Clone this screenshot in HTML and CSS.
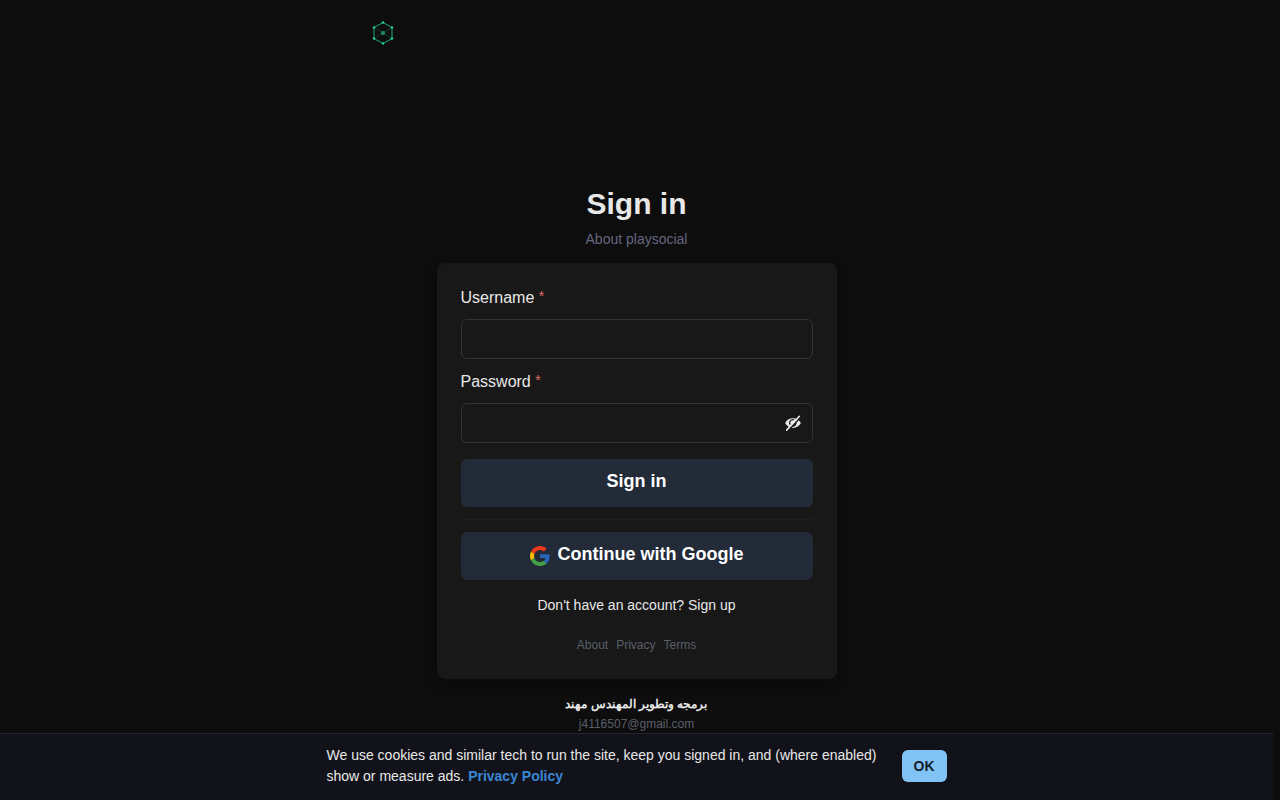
FILE: index.html
```html
<!DOCTYPE html>
<html lang="en">
<head>
    <meta charset="UTF-8">
    <meta name="viewport" content="width=device-width, initial-scale=1.0">
    <title>Sign in</title>
    <link rel="stylesheet" href="styles.css">
</head>
<body>
    <header class="site-header">
        <a href="#" class="logo" aria-label="Home">
            <svg width="24" height="24" viewBox="0 0 24 24" fill="none" stroke="#1fa87c">
                <path d="M12 1.5L21 6.5V17.5L12 22.5L3 17.5V6.5Z" stroke-width="1"/>
                <path d="M12 12L3 6.5M12 12L21 6.5M12 12L3 17.5M12 12L21 17.5" stroke-width="0.8" opacity="0.35"/>
                <circle cx="12" cy="12" r="2.2" fill="#1fa87c" stroke="none" opacity="0.7"/>
                <g fill="#2ecf9a" stroke="none">
                    <circle cx="12" cy="1.5" r="1.2"/>
                    <circle cx="21" cy="6.5" r="1.2"/>
                    <circle cx="21" cy="17.5" r="1.2"/>
                    <circle cx="12" cy="22.5" r="1.2"/>
                    <circle cx="3" cy="17.5" r="1.2"/>
                    <circle cx="3" cy="6.5" r="1.2"/>
                </g>
            </svg>
        </a>
    </header>

    <main class="login">
        <h1>Sign in</h1>
        <a href="#" class="subtitle">About playsocial</a>

        <form class="card">
            <div class="field">
                <label for="username">Username <span class="required">*</span></label>
                <input type="text" id="username">
            </div>
            <div class="field">
                <label for="password">Password <span class="required">*</span></label>
                <div class="password-box">
                    <input type="password" id="password">
                    <button type="button" class="toggle" aria-label="Show password">
                        <svg width="18" height="18" viewBox="0 0 24 24">
                            <path fill="#ececec" d="M1.500 12C3.500 8 7.500 5.500 12 5.500s8.500 2.500 10.500 6.500c-2 4-6 6.500-10.500 6.500S3.500 16 1.500 12z"/>
                            <path d="M8.500 14.500A4.200 4.200 0 0 1 13.500 8M15.800 10.500A4.200 4.200 0 0 1 11 16" fill="none" stroke="#181818" stroke-width="1.6"/>
                            <path d="M5 22.500L22.500 4" stroke="#181818" stroke-width="2"/>
                            <path d="M3.500 21.500L20.500 3" stroke="#ececec" stroke-width="2" stroke-linecap="round"/>
                        </svg>
                    </button>
                </div>
            </div>
            <button type="submit" class="btn">Sign in</button>
            <hr>
            <button type="button" class="btn">
                <svg width="20" height="20" viewBox="0 0 48 48">
                    <path fill="#ea3a1e" d="M24 9.500c3.540 0 6.710 1.220 9.210 3.600l6.850-6.850C35.900 2.380 30.470 0 24 0 14.620 0 6.510 5.380 2.560 13.220l7.980 6.190C12.430 13.720 17.740 9.500 24 9.500z"/>
                    <path fill="#2866b8" d="M46.980 24.550c0-1.570-.15-3.090-.38-4.550H24v9.020h12.940c-.58 2.960-2.260 5.480-4.780 7.180l7.730 6c4.510-4.180 7.090-10.360 7.090-17.650z"/>
                    <path fill="#fbbc05" d="M10.530 28.590c-.48-1.450-.76-2.990-.76-4.590s.27-3.140.76-4.590l-7.980-6.190C.92 16.460 0 20.120 0 24c0 3.880.92 7.540 2.560 10.780l7.970-6.190z"/>
                    <path fill="#43a047" d="M24 48c6.480 0 11.930-2.130 15.890-5.810l-7.730-6c-2.150 1.450-4.920 2.300-8.160 2.300-6.260 0-11.570-4.220-13.470-9.910l-7.980 6.190C6.510 42.620 14.620 48 24 48z"/>
                </svg>
                <span>Continue with Google</span>
            </button>
            <a href="#" class="signup">Don't have an account? Sign up</a>
            <nav class="links">
                <a href="#">About</a>
                <a href="#">Privacy</a>
                <a href="#">Terms</a>
            </nav>
        </form>
    </main>

    <footer class="credits">
        <p class="author" lang="ar" dir="rtl">برمجه وتطوير المهندس مهند</p>
        <a href="mailto:j4116507@gmail.com">j4116507@gmail.com</a>
    </footer>

    <div class="cookie-bar">
        <div class="cookie-content">
            <p>We use cookies and similar tech to run the site, keep you signed in, and (where enabled) show or measure ads. <a href="#">Privacy Policy</a></p>
            <button type="button">OK</button>
        </div>
    </div>
</body>
</html>
```

FILE: styles.css
```css
* {
    box-sizing: border-box;
}

html {
    background: #0d0d0d;
}

body {
    margin: 0;
    padding-right: 7px; /* gutter for the scrollbar */
    font-family: "Liberation Sans", Arial, sans-serif;
    font-size: 16px;
    line-height: 24px;
    color: #e8e8e8;
}

h1,
p {
    margin: 0;
}

a {
    color: inherit;
    text-decoration: none;
}

a:hover {
    text-decoration: underline;
}

button,
input {
    font-family: inherit;
    color: inherit;
}

button {
    border: none;
    cursor: pointer;
}

.site-header {
    max-width: 560px;
    height: 66px;
    margin: 0 auto;
    padding: 0 14px;
    display: flex;
    align-items: center;
}

.logo {
    display: flex;
}

/* Login */
.login {
    display: flex;
    flex-direction: column;
    align-items: center;
    padding-top: 118px;
}

h1 {
    font-size: 30px;
    line-height: 40px;
}

.subtitle {
    margin: 5px 0 13px;
    font-size: 14px;
    line-height: 21px;
    color: #646680;
}

.card {
    width: 100%;
    max-width: 400px;
    padding: 24px;
    display: flex;
    flex-direction: column;
    background: #181818;
    border-radius: 8px;
    box-shadow: 0 4px 12px rgba(0, 0, 0, 0.3);
}

.field {
    margin-bottom: 12px;
}

.field:has(.password-box) {
    margin-bottom: 16px;
}

.field label {
    display: block;
    height: 32px;
    line-height: 22px;
}

.required {
    font-size: 14px;
    line-height: 1;
    vertical-align: 2px;
    color: #e06c66;
}

.field input {
    display: block;
    width: 100%;
    height: 40px;
    padding: 0 16px;
    font-size: 16px;
    background: transparent;
    border: 1px solid #333;
    border-radius: 6px;
}

.field input:focus {
    outline: none;
    border-color: #7cc0f4;
}

.password-box {
    position: relative;
}

.toggle {
    position: absolute;
    top: 0;
    right: 0;
    width: 40px;
    height: 40px;
    padding: 0;
    display: flex;
    align-items: center;
    justify-content: center;
    background: none;
}

.btn {
    display: flex;
    align-items: center;
    justify-content: center;
    gap: 8px;
    height: 48px;
    padding: 0 24px 4px;
    font-size: 18px;
    font-weight: bold;
    line-height: 24px;
    color: #fff;
    background: #232a38;
    border-radius: 6px;
}

.btn svg {
    margin-top: 4px;
}

.card hr {
    width: 100%;
    margin: 12px 0;
    border: none;
    border-top: 1px solid #1f1f1f;
}

.signup {
    align-self: center;
    margin-top: 13px;
    font-size: 14px;
}

.links {
    display: flex;
    justify-content: center;
    gap: 8px;
    margin-top: 18px;
    font-size: 12px;
    line-height: 20px;
    color: #5b5f6b;
}

/* Credits */
.credits {
    padding: 15px 0 80px;
    text-align: center;
    font-size: 12px;
    line-height: 20px;
    color: #5b5f6b;
}

.author {
    font-weight: bold;
    color: #e8e8e8;
}

/* Cookie notice */
.cookie-bar {
    position: fixed;
    left: 0;
    right: 7px;
    bottom: 0;
    padding: 11px 0 13px;
    background: #12131a;
    border-top: 1px solid #25262b;
}

.cookie-content {
    max-width: 620px;
    margin: 0 auto;
    display: flex;
    align-items: center;
    justify-content: space-between;
    gap: 12px;
    font-size: 14px;
    line-height: 21px;
}

.cookie-content a {
    font-weight: bold;
    color: #3a86d4;
}

.cookie-content button {
    height: 32px;
    padding: 0 12px;
    font-size: 14px;
    font-weight: bold;
    color: #14202c;
    background: #82c3f6;
    border-radius: 6px;
}
```
